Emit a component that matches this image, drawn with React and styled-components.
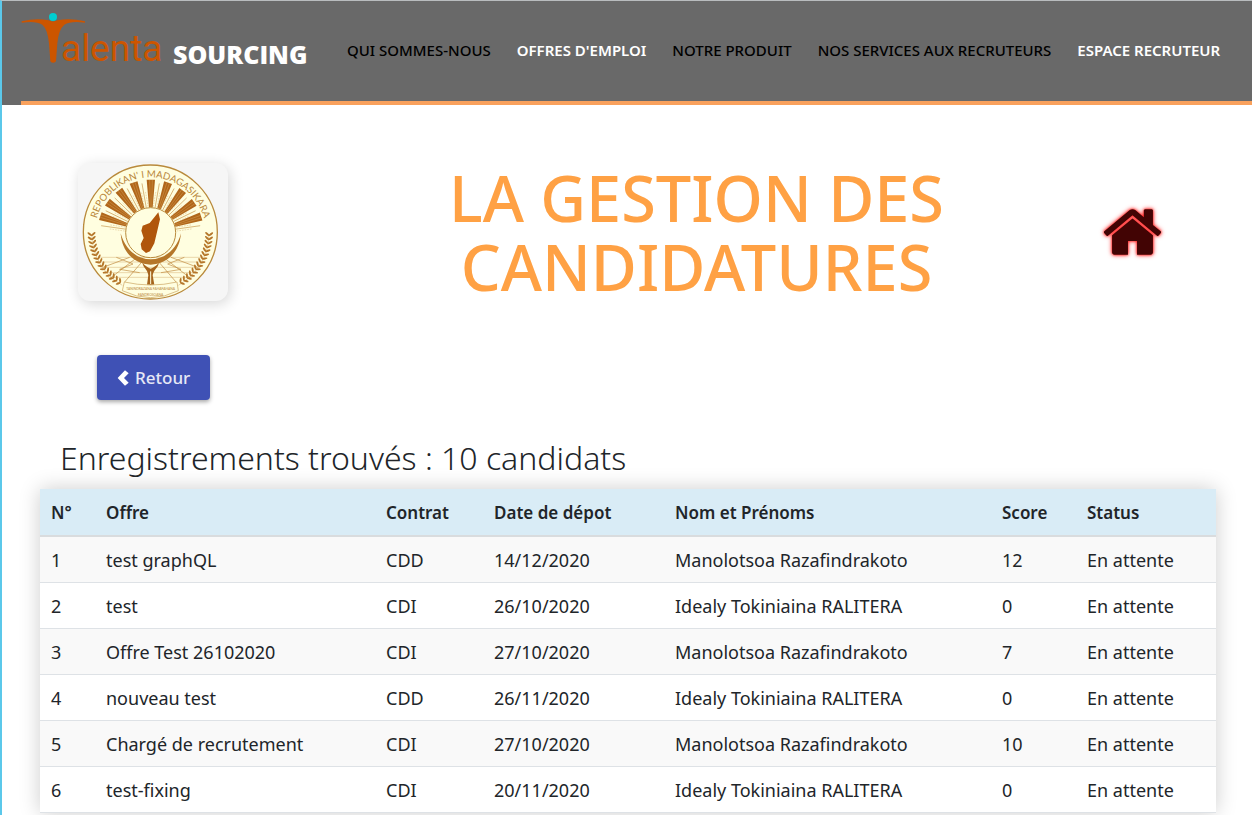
import React from "react";
import styled, { createGlobalStyle, css } from "styled-components";

const GlobalStyle = createGlobalStyle`
  *, *::before, *::after { box-sizing: border-box; }
  body {
    margin: 0;
    background: #fff;
    color: #212529;
    font-family: "Noto Sans", "Open Sans", sans-serif;
    font-size: 18px;
  }
`;

const Page = styled.div`
  min-height: 100vh;
  border-left: 2px solid #5bc8ea;
  border-top: 1px solid #b9bcbe;
  overflow: hidden;
`;

const Header = styled.header`
  background: #696969;
  padding-left: 19px;
`;

const HeaderInner = styled.div`
  display: flex;
  align-items: flex-start;
  height: 104px;
  border-bottom: 4px solid #f9a15c;
`;

const Brand = styled.a`
  display: flex;
  flex: none;
  width: 326px;
  color: #fff;
  text-decoration: none;
`;

const LogoMark = styled.svg`
  flex: none;
  width: 152px;
  height: 72px;
`;

const LogoText = styled.text`
  font-family: Roboto, sans-serif;
  font-size: 37px;
  fill: #cc5500;
`;

const BrandName = styled.span`
  padding-top: 36px;
  font-family: "Open Sans", sans-serif;
  font-size: 25px;
  font-weight: 800;
  line-height: 34px;
`;

const Nav = styled.nav`
  display: flex;
  gap: 26px;
  padding-top: 38px;
`;

const NavLink = styled.a`
  color: ${(p) => (p.$strong ? "#fff" : "#000")};
  font-size: 15px;
  font-weight: ${(p) => (p.$strong ? 600 : 500)};
  line-height: 22px;
  text-decoration: none;
  white-space: nowrap;
`;

const Hero = styled.section`
  display: flex;
  align-items: center;
  justify-content: space-between;
  padding: 58px 90px 0 76px;
`;

const Emblem = styled.svg`
  display: block;
  width: 150px;
  height: 138px;
  border-radius: 12px;
  background: #f6f6f6;
  box-shadow: 2px 3px 14px rgba(0, 0, 0, 0.16);
`;

const EmblemText = styled.text`
  font-family: Lato, sans-serif;
  font-size: ${(p) => (p.$small ? "10px" : "29px")};
  fill: #b8863a;
`;

const Title = styled.h1`
  flex: 1;
  max-width: 560px;
  margin: 0 0 0 62px;
  color: #ffa144;
  font-size: 63px;
  font-weight: 500;
  line-height: 69px;
  text-align: center;
`;

const HomeLink = styled.a`
  display: block;
  height: 64px;
`;

const HomeIcon = styled.svg`
  display: block;
  width: 59px;
  height: 64px;
  fill: #420404;
  overflow: visible;
  filter: drop-shadow(0 0 1px #ff2020) drop-shadow(0 0 2px #ff3030);
`;

const BackButton = styled.button`
  display: flex;
  align-items: center;
  gap: 5px;
  height: 45px;
  margin: 54px 0 0 95px;
  padding: 0 20px;
  border: 0;
  border-radius: 4px;
  background: #3f51b5;
  box-shadow: 0 2px 4px rgba(0, 0, 0, 0.35);
  color: #e6e8f6;
  font-family: inherit;
  font-size: 17px;
  font-weight: 500;
`;

const ChevronIcon = styled.svg`
  width: 13px;
  height: 16px;
  fill: #fff;
`;

const Subtitle = styled.h2`
  margin: 38px 0 11px 58px;
  font-size: 32px;
  font-weight: 300;
  line-height: 40px;
`;

const TableWrap = styled.div`
  margin: 0 36px 0 38px;
  box-shadow: 0 0 20px rgba(0, 0, 0, 0.2);
`;

const Table = styled.table`
  width: 100%;
  table-layout: fixed;
  border-collapse: separate;
  border-spacing: 0;
`;

const Col = styled.col`
  width: ${(p) => (p.$w ? `${p.$w}px` : "auto")};
`;

const cell = css`
  padding: 0 11px;
  text-align: left;
  white-space: nowrap;
`;

const Th = styled.th`
  ${cell}
  height: 48px;
  border-bottom: 2px solid #d9dcde;
  background: #d9ecf6;
  font-size: 17px;
  font-weight: 600;
`;

const Td = styled.td`
  ${cell}
  height: 46px;
  border-bottom: 1px solid #dee2e6;
`;

const Row = styled.tr`
  background: #fff;
  &:nth-child(odd) { background: #f9f9f9; }
`;

const NAV = [
  { label: "QUI SOMMES-NOUS" },
  { label: "OFFRES D'EMPLOI", strong: true },
  { label: "NOTRE PRODUIT" },
  { label: "NOS SERVICES AUX RECRUTEURS" },
  { label: "ESPACE RECRUTEUR", strong: true },
];

const COLUMNS = [
  { label: "N°", width: 55 },
  { label: "Offre", width: 280 },
  { label: "Contrat", width: 108 },
  { label: "Date de dépot", width: 181 },
  { label: "Nom et Prénoms" },
  { label: "Score", width: 85 },
  { label: "Status", width: 140 },
];

const ROWS = [
  [1, "test graphQL", "CDD", "14/12/2020", "Manolotsoa Razafindrakoto", 12, "En attente"],
  [2, "test", "CDI", "26/10/2020", "Idealy Tokiniaina RALITERA", 0, "En attente"],
  [3, "Offre Test 26102020", "CDI", "27/10/2020", "Manolotsoa Razafindrakoto", 7, "En attente"],
  [4, "nouveau test", "CDD", "26/11/2020", "Idealy Tokiniaina RALITERA", 0, "En attente"],
  [5, "Chargé de recrutement", "CDI", "27/10/2020", "Manolotsoa Razafindrakoto", 10, "En attente"],
  [6, "test-fixing", "CDI", "20/11/2020", "Idealy Tokiniaina RALITERA", 0, "En attente"],
];

function Logo() {
  return (
    <LogoMark viewBox="21 1 152 72" aria-hidden="true">
      <path
        transform="scale(0.33333)"
        d="M65 64Q110 53 145 61Q159 68 173 61Q210 53 255 64V68Q212 62 193 74Q176 88 172 130L168 184Q159 193 151 184L147 130Q143 88 127 74Q108 62 65 68Z"
        fill="#cc5500"
      />
      <circle cx="53" cy="17" r="4" fill="#00ced1" />
      <LogoText x="61" y="61">alenta</LogoText>
    </LogoMark>
  );
}

const RAYS = [-72, -55, -37, -19, 0, 19, 37, 55, 72];
const THIN_RAYS = [-82, -64, -46, -28, -10, 10, 28, 46, 64, 82];
const LEAVES = Array.from({ length: 15 }, (_, i) => 2 + i * 4);

function Wreath({ mirrored }) {
  return (
    <g transform={mirrored ? "translate(484 0) scale(-1 1)" : undefined}>
      <path d="M66 250A180 180 0 0 0 158 404" fill="none" stroke="#b5772a" strokeWidth="1" />
      {LEAVES.map((a) => (
        <g key={a} transform={`rotate(${-a} 242 244)`} fill="#b5772a">
          <ellipse cx="60" cy="244" rx="8" ry="3" transform="rotate(38 60 244)" />
          <ellipse cx="71" cy="244" rx="8" ry="3" transform="rotate(-38 71 244)" />
        </g>
      ))}
    </g>
  );
}

function Seal() {
  return (
    <Emblem viewBox="25 37 450 414" role="img" aria-label="Repoblikan'i Madagasikara">
      <circle cx="242" cy="244" r="201" fill="#fffee0" stroke="#b98a3c" strokeWidth="4" />
      <path id="seal-arc" d="M77 264A166 166 0 1 1 407 264" fill="none" />
      <EmblemText textAnchor="middle">
        <textPath href="#seal-arc" startOffset="50%">REPOBLIKAN' I MADAGASIKARA</textPath>
      </EmblemText>
      {THIN_RAYS.map((a) => (
        <g key={a} transform={`rotate(${a} 243 246)`} stroke="#c99a50" fill="none">
          <path d="M243 170V96" strokeWidth="2" />
          <path d="M237 168V120M249 168V120" strokeWidth="1" strokeDasharray="5 3" />
        </g>
      ))}
      {RAYS.map((a) => (
        <g key={a} transform={`rotate(${a} 243 246)`}>
          <path d="M231 87H256L249 170H238Z" fill="#b0661a" />
          <path d="M240 88L242 170M248 88L246 170" stroke="#e3b56b" strokeWidth="1" />
        </g>
      ))}
      <g fill="none" stroke="#c08a3c" strokeWidth="2">
        <path d="M92 320H392M78 334H406M92 350H392M104 366H380M116 380H368" strokeWidth="1" />
        <path d="M180 320L100 350M200 322L120 384M220 330L165 394M304 320L384 350M284 322L364 384M264 330L319 394" />
        <path d="M140 320L190 340L150 356L210 366M344 320L294 340L334 356L274 366" />
      </g>
      <circle cx="243" cy="246" r="75" fill="#fffee0" stroke="#b98a3c" strokeWidth="3" />
      <path
        d="M153 248C156 300 190 340 243 342C296 340 330 300 334 248C322 292 290 325 243 326C196 325 166 292 153 248Z"
        fill="#b5772a"
      />
      <path
        d="M266 185L271 206L264 236L254 278L241 302L229 307L216 296L213 280L222 262L215 240L219 225L240 217L254 200Z"
        fill="#b0560c"
      />
      <path
        d="M218 336C222 354 234 356 236 374L232 402H254L249 374C252 356 264 354 268 336C258 346 252 350 243 354C234 350 228 346 218 336Z"
        fill="#a5641c"
      />
      <path d="M243 362V400" stroke="#fffee0" strokeWidth="3" />
      <Wreath />
      <Wreath mirrored />
      <path d="M164 394Q243 412 322 394L326 420Q243 462 158 420Z" fill="#fffee0" stroke="#c9a05a" strokeWidth="2" />
      <EmblemText $small x="243" y="417" textAnchor="middle">TANINDRAZANA FAHAFAHANA</EmblemText>
      <EmblemText $small x="243" y="435" textAnchor="middle">FANDROSOANA</EmblemText>
    </Emblem>
  );
}

export default function App() {
  return (
    <Page>
      <GlobalStyle />
      <Header>
        <HeaderInner>
          <Brand href="#" aria-label="Talenta Sourcing">
            <Logo />
            <BrandName>SOURCING</BrandName>
          </Brand>
          <Nav>
            {NAV.map((n) => (
              <NavLink key={n.label} href="#" $strong={n.strong}>{n.label}</NavLink>
            ))}
          </Nav>
        </HeaderInner>
      </Header>
      <main>
        <Hero>
          <Seal />
          <Title>LA GESTION DES CANDIDATURES</Title>
          <HomeLink href="#" aria-label="Accueil">
            <HomeIcon viewBox="0 0 1664 1792" aria-hidden="true">
              <path d="M1408 992v480q0 26-19 45t-45 19h-384v-384h-256v384h-384q-26 0-45-19t-19-45v-480q0-1 .5-3t.5-3l575-474 575 474q1 2 1 6zm223-69l-62 74q-8 9-21 11h-3q-13 0-21-7l-692-577-692 577q-12 8-24 7-13-2-21-11l-62-74q-8-10-7-23.5t11-21.5l719-599q32-26 76-26t76 26l244 204v-195q0-14 9-23t23-9h192q14 0 23 9t9 23v408l219 182q10 8 11 21.5t-7 23.5z" />
            </HomeIcon>
          </HomeLink>
        </Hero>
        <BackButton type="button">
          <ChevronIcon viewBox="110 87 39 48" aria-hidden="true">
            <path d="M134 88L145 97L131 111L145 125L134 134L112 111Z" />
          </ChevronIcon>
          Retour
        </BackButton>
        <Subtitle>Enregistrements trouvés : 10 candidats</Subtitle>
        <TableWrap>
          <Table>
            <colgroup>
              {COLUMNS.map((c) => <Col key={c.label} $w={c.width} />)}
            </colgroup>
            <thead>
              <tr>{COLUMNS.map((c) => <Th key={c.label} scope="col">{c.label}</Th>)}</tr>
            </thead>
            <tbody>
              {ROWS.map((r) => (
                <Row key={r[0]}>{r.map((v, i) => <Td key={COLUMNS[i].label}>{v}</Td>)}</Row>
              ))}
            </tbody>
          </Table>
        </TableWrap>
      </main>
    </Page>
  );
}
